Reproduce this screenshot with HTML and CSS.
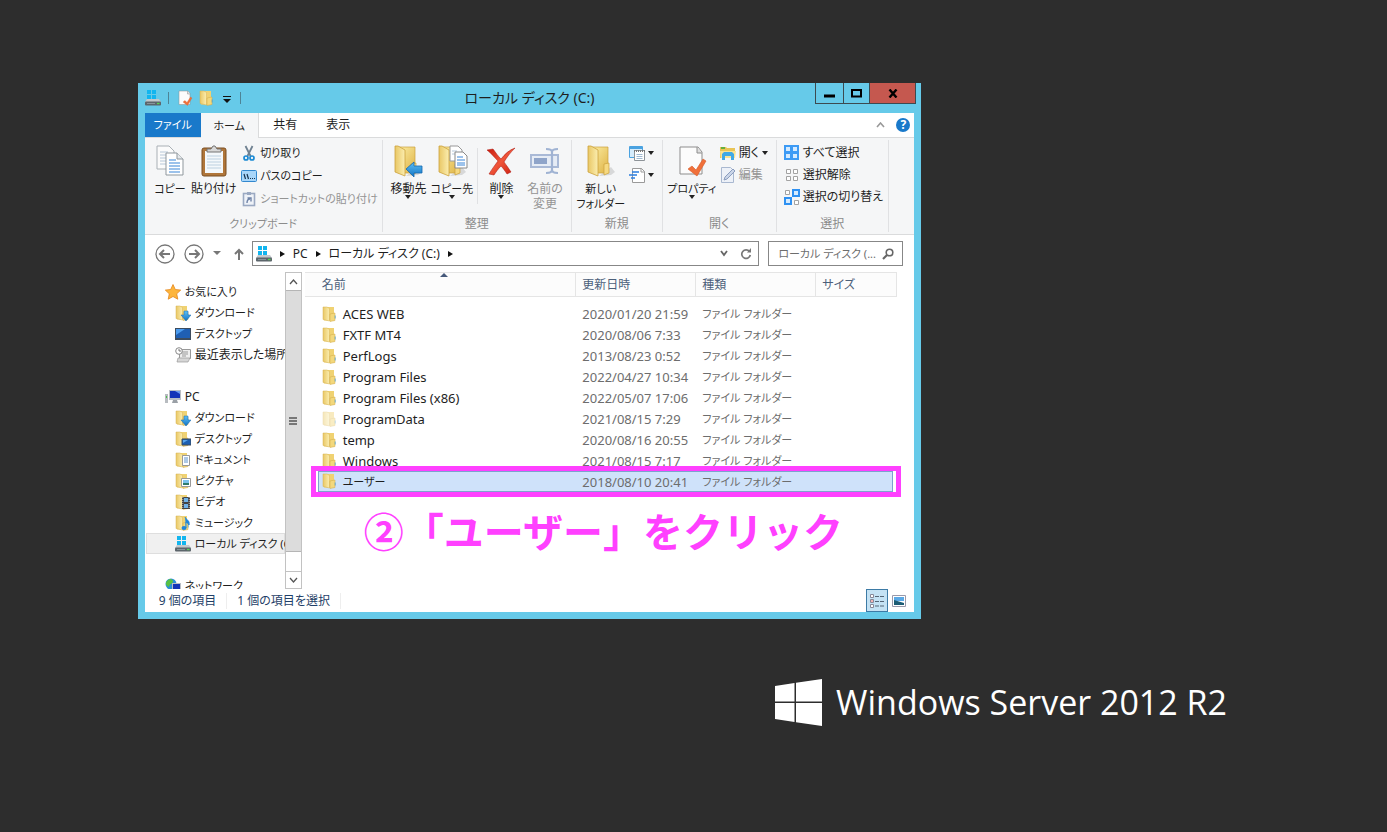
FILE: index.html
```html
<!DOCTYPE html>
<html lang="ja">
<head>
    <meta charset="UTF-8">
    <meta name="viewport" content="width=device-width, initial-scale=1.0">
    <title>ローカル ディスク (C:)</title>
    <link rel="stylesheet" href="styles.css">
</head>
<body>
    <!-- アイコン定義 -->
    <svg class="sprite" width="0" height="0" aria-hidden="true">
        <defs>
            <linearGradient id="gold" x1="0" x2="1" y1="0" y2="1">
                <stop offset="0" stop-color="#fdf0a8"/>
                <stop offset="1" stop-color="#dfb345"/>
            </linearGradient>
            <linearGradient id="gold2" x1="0" x2="1">
                <stop offset="0" stop-color="#e9c765"/>
                <stop offset="1" stop-color="#fbeeb0"/>
            </linearGradient>
            <linearGradient id="blue" x1="0" x2="0" y1="0" y2="1">
                <stop offset="0" stop-color="#5ec0f5"/>
                <stop offset="1" stop-color="#1273c4"/>
            </linearGradient>
            <linearGradient id="red" x1="0" x2="1" y1="0" y2="1">
                <stop offset="0" stop-color="#c8190c"/>
                <stop offset="0.5" stop-color="#f0553a"/>
                <stop offset="1" stop-color="#c8190c"/>
            </linearGradient>
        </defs>
        <symbol id="i-folder" viewBox="0 0 16 16">
            <path d="M2 1h10v13.500H2z" fill="#f0d272"/>
            <path d="M1 1h4l2.500 1.500V15L1 13.500z" fill="url(#gold2)" stroke="#d6b252" stroke-width=".5"/>
            <path d="M8 8l5-1v7.500L8 15.500z" fill="#f3d87c" stroke="#d0ab48" stroke-width=".5"/>
            <path d="M13.200 9.500v3" stroke="#4b9fd0" stroke-width=".8"/>
        </symbol>
        <symbol id="i-folder-lg" viewBox="0 0 32 32">
            <path d="M26 22l4 5-4 3-12 1z" fill="#000" opacity=".12"/>
            <path d="M5 2h18v26H8z" fill="url(#gold)" stroke="#cba23c" stroke-width=".7"/>
            <path d="M19 19l5-1v10l-5 2z" fill="#f6d980" stroke="#cba23c" stroke-width=".7"/>
            <path d="M3 1h3l7 4v26l-10-4z" fill="url(#gold2)" stroke="#cba23c" stroke-width=".8"/>
        </symbol>
        <symbol id="i-drive" viewBox="0 0 16 16">
            <path d="M2 0h4v4H2zM7 0h4v4H7zM2 5h4v4H2zM7 5h4v4H7z" fill="#12b5ef"/>
            <path d="M2 9h12l2 3H0z" fill="#c3c8cc"/>
            <rect y="11.5" width="16" height="4" rx="1" fill="#5c656b"/>
            <path d="M12 13.5h2.5" stroke="#56d44e" stroke-width="1.3"/>
            <path d="M2 13.5h8" stroke="#87939a"/>
        </symbol>
        <symbol id="i-props" viewBox="0 0 32 32">
            <path d="M4 2h18l4 5v22H4z" fill="#fcfcfc" stroke="#8d8d8d"/>
            <path d="M21 2v6h5" fill="#ddd" stroke="#8d8d8d"/>
            <path d="M12 24l4-3 4 4 7-11 3 2-9 15z" fill="#f0703a" stroke="#d55b2a" stroke-width=".6"/>
        </symbol>
        <symbol id="i-copy" viewBox="0 0 32 32">
            <path d="M3 1h12l5 5v18H3z" fill="#fbfbfb" stroke="#a9b0b5"/>
            <path d="M6 7h8M6 10h10M6 13h6M6 16h6M6 19h6" stroke="#b6c7d8"/>
            <path d="M12 8h11l6 6v16H12z" fill="#fff" stroke="#8f979d"/>
            <path d="M23 8v6h6" fill="#e5e9ec" stroke="#8f979d"/>
            <path d="M15 15h7M15 18h11M15 21h11M15 24h11M15 27h11" stroke="#3a86d8" stroke-width="1.2"/>
        </symbol>
        <symbol id="i-paste" viewBox="0 0 32 32">
            <rect x="4" y="3" width="24" height="28" rx="2" fill="#b0763a" stroke="#7b4e22"/>
            <path d="M7 6h18v22H7z" fill="#f4f8fb"/>
            <path d="M9 11h14M9 14h14M9 17h14M9 20h14M9 23h14" stroke="#bcd0e0"/>
            <path d="M9 7V4h4l2-3h2l2 3h4v3z" fill="#d8d8d8" stroke="#747474"/>
        </symbol>
        <symbol id="i-cut" viewBox="0 0 16 16">
            <path d="M4.500 1l5 10M11.500 1l-5 10" fill="none" stroke="#6f8191" stroke-width="1.8"/>
            <circle cx="5" cy="13" r="2" fill="none" stroke="#1b8ad4" stroke-width="1.7"/>
            <circle cx="11" cy="13" r="2" fill="none" stroke="#1b8ad4" stroke-width="1.7"/>
        </symbol>
        <symbol id="i-path" viewBox="0 0 16 16">
            <rect x=".5" y="2.500" width="15" height="11" rx="1" fill="#a8d6fa" stroke="#3288cf"/>
            <path d="M3 6l1.500 5M6 6l1.500 5" stroke="#16324e" stroke-width="1.2"/>
            <path d="M9 10.500h1M11 10.500h1M13 10.500h1" stroke="#16324e" stroke-width="1.2"/>
        </symbol>
        <symbol id="i-shortcut" viewBox="0 0 16 16">
            <rect x="2.500" y="2.500" width="11" height="12" fill="#eef2f8" stroke="#9aa9c2" stroke-width="1.6"/>
            <path d="M6 1h4v3H6z" fill="#9aa9c2"/>
            <path d="M6 12c0-3 1-4 3-4M6.500 7H10v3.500" fill="none" stroke="#6e82a6" stroke-width="1.4"/>
        </symbol>
        <symbol id="i-moveto" viewBox="0 0 32 32">
            <use href="#i-folder-lg" width="32" height="32"/>
            <path d="M14 24l8-7v4h8v7h-8v4z" fill="url(#blue)" stroke="#1568ae" stroke-width=".8"/>
        </symbol>
        <symbol id="i-copyto" viewBox="0 0 32 32">
            <use href="#i-folder-lg" width="32" height="32"/>
            <path d="M14 1h8l4 4v11H14z" fill="#fff" stroke="#999"/>
            <path d="M16 6h5M16 9h6" stroke="#b6c7d8"/>
            <path d="M19 7h8l4 4v12H19z" fill="#fff" stroke="#888"/>
            <path d="M21 12h6M21 15h8M21 18h8M21 20h8" stroke="#3a86d8"/>
        </symbol>
        <symbol id="i-delete" viewBox="0 0 32 32">
            <path d="M2 5l6-1c3 4 5 7 8 10 4-5 8-9 14-11-5 5-8 9-11 14 3 4 5 7 7 10l-4 2c-2-3-4-6-6-8-3 3-5 6-7 9l-5-1c3-5 6-9 9-13C9 12 6 8 2 5z" fill="url(#red)" stroke="#a8140c" stroke-width=".5"/>
        </symbol>
        <symbol id="i-rename" viewBox="0 0 32 32">
            <rect x="2" y="10" width="27" height="12" fill="#e6ecf5" stroke="#a9b9d6" stroke-width="2"/>
            <rect x="5" y="13" width="13" height="6" fill="#8fa4c9"/>
            <path d="M17 4c3 0 6 0 6 3v18c0 3-3 3-6 3M29 4c-3 0-6 0-6 3v18c0 3 3 3 6 3" fill="none" stroke="#a0b3d3" stroke-width="2.200"/>
        </symbol>
        <symbol id="i-newitem" viewBox="0 0 16 16">
            <path d="M.5 1.500h13v11H.5z" fill="#d5ecfc" stroke="#4aa2e0"/>
            <path d="M1 2h12v2H1z" fill="#4aa2e0"/>
            <path d="M5.500 5.500h10v10h-10z" fill="#fff" stroke="#8d9398"/>
            <path d="M5 6h11" stroke="#777" stroke-width="2" stroke-dasharray="1 1"/>
            <path d="M7.500 9.500h6M7.500 11.500h6M7.500 13.500h6" stroke="#9fb9d0"/>
        </symbol>
        <symbol id="i-easy" viewBox="0 0 16 16">
            <path d="M3.500 1.500h9l3 3v11h-12z" fill="#fff" stroke="#9a9a9a"/>
            <path d="M12 1v4h4" fill="none" stroke="#9a9a9a"/>
            <path d="M3 5h7M0 8h8M2 11h4" stroke="#2d7fe0" stroke-width="1.5"/>
        </symbol>
        <symbol id="i-open" viewBox="0 0 16 16">
            <path d="M0 2h6l1 1h8v10H0z" fill="#e9c456"/>
            <path d="M1 3h4" stroke="#3aa935" stroke-width="1.5"/>
            <path d="M0 6h16l-1 7H1z" fill="#f9e394"/>
            <path d="M2 15V9l2-2h8l2 2v6h-3v-4H5v4z" fill="#3fa9e6"/>
        </symbol>
        <symbol id="i-edit" viewBox="0 0 16 16">
            <path d="M1.500.5h9l3 3v12h-12z" fill="#edf1f8" stroke="#a9b8d0"/>
            <path d="M4 13l1-3 8-8 2 2-8 8z" fill="#cad5e8" stroke="#8b9dbe"/>
        </symbol>
        <symbol id="i-selall" viewBox="0 0 16 16">
            <path d="M0 0h15v15H0z" fill="#3d9bf5"/>
            <path d="M2 2h4v4H2zM9 2h4v4H9zM2 9h4v4H2zM9 9h4v4H9z" fill="#d5ebff"/>
        </symbol>
        <symbol id="i-selnone" viewBox="0 0 16 16">
            <path d="M2.500 2.500h4v4h-4zM9.500 2.500h4v4h-4zM2.500 9.500h4v4h-4zM9.500 9.500h4v4h-4z" fill="#fff" stroke="#a3a3a3"/>
        </symbol>
        <symbol id="i-selinv" viewBox="0 0 16 16">
            <path d="M1.500 1.500h4v4h-4zM10.500 11.500h4v4h-4z" fill="#fff" stroke="#a3a3a3"/>
            <path d="M9 1h6v6H9zM1 9h6v6H1z" fill="#d5ebff" stroke="#2f91f2" stroke-width="2"/>
        </symbol>
        <symbol id="i-star" viewBox="0 0 16 16">
            <path d="M8 .5l2.300 5 5.400.600-4 3.700 1.100 5.400L8 12.500l-4.800 2.700 1.100-5.400-4-3.700 5.400-.6z" fill="#fdb53c" stroke="#e5861c" stroke-width=".8"/>
        </symbol>
        <symbol id="i-desktop" viewBox="0 0 16 16">
            <path d="M0 2h16v12H0z" fill="#3d4c5e"/>
            <path d="M1 3h14v9H1z" fill="#1f5fb4"/>
            <path d="M1 3h9L1 9z" fill="#4b9cf0"/>
        </symbol>
        <symbol id="i-recent" viewBox="0 0 16 16">
            <path d="M4.500 2.500h11v9h-11z" fill="#eee" stroke="#999"/>
            <path d="M7 5h6M7 7h6M7 9h4" stroke="#999"/>
            <path d="M3 11h12l-2 4H2z" fill="#d6d6d6" stroke="#999" stroke-width=".7"/>
            <circle cx="4" cy="4" r="3.300" fill="#fff" stroke="#888"/>
            <path d="M4 2v2h2" fill="none" stroke="#555" stroke-width=".8"/>
        </symbol>
        <symbol id="i-pc" viewBox="0 0 16 16">
            <path d="M0 5h3v9H0z" fill="#b8bcc0"/>
            <path d="M1 7h1v2H1z" fill="#4cc04a"/>
            <path d="M4 1h12v10H4z" fill="#b9bec5"/>
            <path d="M5 2h10v7H5z" fill="#1434b8"/>
            <path d="M10 2h5v3z" fill="#6b9bf0"/>
            <path d="M8 11h4l1 3H7z" fill="#9aa0a6"/>
        </symbol>
        <symbol id="i-f-down" viewBox="0 0 16 16">
            <use href="#i-folder" width="16" height="16"/>
            <path d="M9 6h4v4h3l-5 6-5-6h3z" fill="url(#blue)" stroke="#1568ae" stroke-width=".5"/>
        </symbol>
        <symbol id="i-f-desk" viewBox="0 0 16 16">
            <use href="#i-folder" width="16" height="16"/>
            <path d="M7 8h9v6H7z" fill="#1d5fb0" stroke="#3d4c5e"/>
            <path d="M8 9h5l-5 3z" fill="#5aa6ee"/>
        </symbol>
        <symbol id="i-f-doc" viewBox="0 0 16 16">
            <use href="#i-folder" width="16" height="16"/>
            <path d="M7.500 3.500h7v10h-7z" fill="#fff" stroke="#999"/>
            <path d="M9 6h4M9 8h4M9 10h4" stroke="#5b92cc"/>
        </symbol>
        <symbol id="i-f-pic" viewBox="0 0 16 16">
            <use href="#i-folder" width="16" height="16"/>
            <path d="M6.500 5.500h9v8h-9z" fill="#fff" stroke="#999"/>
            <path d="M8 7h6v3H8z" fill="#7cc3ee"/>
            <path d="M8 10h6v2H8z" fill="#2e7b6c"/>
        </symbol>
        <symbol id="i-f-video" viewBox="0 0 16 16">
            <use href="#i-folder" width="16" height="16"/>
            <path d="M7 3h8v12H7z" fill="#444"/>
            <path d="M9 4h4v4H9zM9 10h4v4H9z" fill="#6fb2e8"/>
            <path d="M7.800 3v12M14.200 3v12" stroke="#ddd" stroke-dasharray="1 1" stroke-width=".8"/>
        </symbol>
        <symbol id="i-f-music" viewBox="0 0 16 16">
            <use href="#i-folder" width="16" height="16"/>
            <path d="M10 2c1 3 5 3 4 8-1-2-2-2-3-3v6" fill="#1e86dc" stroke="#1e86dc"/>
            <ellipse cx="9" cy="13" rx="2.500" ry="2" fill="#1e86dc"/>
        </symbol>
        <symbol id="i-net" viewBox="0 0 16 16">
            <circle cx="6" cy="6" r="5.500" fill="#2a8fd8"/>
            <path d="M2 3c3-3 5-2 6 0S4 6 4 9C1 8 0 5 2 3z" fill="#58c043"/>
            <path d="M7 5h9v8H7z" fill="#b9bec5"/>
            <path d="M8 6h7v6H8z" fill="#1434b8"/>
        </symbol>
    </svg>

    <main class="desktop">
        <section class="window">
            <header class="titlebar">
                <div class="quick">
                    <svg class="icon"><use href="#i-drive"/></svg>
                    <span class="quick-sep"></span>
                    <button aria-label="プロパティ"><svg class="icon"><use href="#i-props"/></svg></button>
                    <button aria-label="新しいフォルダー"><svg class="icon"><use href="#i-folder"/></svg></button>
                    <button class="quick-more" aria-label="カスタマイズ"><svg width="8" height="7"><path d="M0 .5h8" stroke="#111"/><path d="M0 3h8L4 7z" fill="#111"/></svg></button>
                    <span class="quick-sep"></span>
                </div>
                <h1>ローカル ディスク (C:)</h1>
                <div class="window-buttons">
                    <button class="minimize" aria-label="最小化"><svg width="11" height="9"><path d="M0 7h11" stroke="#000" stroke-width="3"/></svg></button>
                    <button class="maximize" aria-label="最大化"><svg width="11" height="9"><path d="M1 1h9v6.500H1z" fill="none" stroke="#000" stroke-width="2"/></svg></button>
                    <button class="close" aria-label="閉じる"><svg width="10" height="9"><path d="M1.500 0.500l7 8M8.500 0.500l-7 8" stroke="#000" stroke-width="2.400"/></svg></button>
                </div>
            </header>

            <div class="window-body">
                <nav class="tabs">
                    <button class="tab tab-file">ファイル</button>
                    <button class="tab active">ホーム</button>
                    <button class="tab">共有</button>
                    <button class="tab">表示</button>
                    <div class="tabs-right">
                        <button aria-label="リボンの最小化"><svg width="9" height="6"><path d="M1 5l3.500-4L8 5" fill="none" stroke="#999" stroke-width="1.600"/></svg></button>
                        <button class="help" aria-label="ヘルプ">?</button>
                    </div>
                </nav>

                <!-- リボン -->
                <div class="ribbon">
                    <div class="group group-clipboard">
                        <div class="group-items">
                            <button class="big"><svg class="icon-lg"><use href="#i-copy"/></svg><span class="kana">コピー</span></button>
                            <button class="big"><svg class="icon-lg"><use href="#i-paste"/></svg>貼り付け</button>
                            <div class="smalls">
                                <button class="small"><svg class="icon"><use href="#i-cut"/></svg>切り取り</button>
                                <button class="small"><svg class="icon"><use href="#i-path"/></svg>パスのコピー</button>
                                <button class="small disabled"><svg class="icon"><use href="#i-shortcut"/></svg>ショートカットの貼り付け</button>
                            </div>
                        </div>
                        <div class="group-name kana">クリップボード</div>
                    </div>
                    <div class="group group-organize">
                        <div class="group-items">
                            <button class="big"><svg class="icon-lg"><use href="#i-moveto"/></svg>移動先<i class="arrow"></i></button>
                            <button class="big"><svg class="icon-lg"><use href="#i-copyto"/></svg><span class="kana">コピー先</span><i class="arrow"></i></button>
                            <span class="item-sep"></span>
                            <button class="big"><svg class="icon-lg"><use href="#i-delete"/></svg>削除<i class="arrow"></i></button>
                            <button class="big disabled"><svg class="icon-lg"><use href="#i-rename"/></svg>名前の<br>変更</button>
                        </div>
                        <div class="group-name">整理</div>
                    </div>
                    <div class="group group-new">
                        <div class="group-items">
                            <button class="big"><svg class="icon-lg"><use href="#i-folder-lg"/></svg>新しい<br>フォルダー</button>
                            <div class="smalls">
                                <button class="small" aria-label="新しいアイテム"><svg class="icon"><use href="#i-newitem"/></svg><i class="arrow"></i></button>
                                <button class="small" aria-label="ショートカット"><svg class="icon"><use href="#i-easy"/></svg><i class="arrow"></i></button>
                            </div>
                        </div>
                        <div class="group-name">新規</div>
                    </div>
                    <div class="group group-open">
                        <div class="group-items">
                            <button class="big"><svg class="icon-lg"><use href="#i-props"/></svg>プロパティ<i class="arrow"></i></button>
                            <div class="smalls">
                                <button class="small"><svg class="icon"><use href="#i-open"/></svg>開く<i class="arrow"></i></button>
                                <button class="small disabled"><svg class="icon"><use href="#i-edit"/></svg>編集</button>
                            </div>
                        </div>
                        <div class="group-name">開く</div>
                    </div>
                    <div class="group group-select">
                        <div class="group-items">
                            <div class="smalls">
                                <button class="small"><svg class="icon"><use href="#i-selall"/></svg>すべて選択</button>
                                <button class="small"><svg class="icon"><use href="#i-selnone"/></svg>選択解除</button>
                                <button class="small"><svg class="icon"><use href="#i-selinv"/></svg>選択の切り替え</button>
                            </div>
                        </div>
                        <div class="group-name">選択</div>
                    </div>
                </div>

                <!-- アドレスバー -->
                <div class="address-row">
                    <button aria-label="戻る"><svg width="20" height="20"><circle cx="10" cy="10" r="9" fill="none" stroke="#777" stroke-width="1.300"/><path d="M5 10h10M9 6l-4 4 4 4" fill="none" stroke="#777" stroke-width="2"/></svg></button>
                    <button aria-label="進む"><svg width="20" height="20"><circle cx="10" cy="10" r="9" fill="none" stroke="#777" stroke-width="1.300"/><path d="M15 10H5M11 6l4 4-4 4" fill="none" stroke="#777" stroke-width="2"/></svg></button>
                    <button aria-label="最近表示した場所"><svg width="8" height="5"><path d="M0 0h8L4 4z" fill="#777"/></svg></button>
                    <button class="up" aria-label="上へ"><svg width="10" height="12"><path d="M5 12V2M1 6l4-4 4 4" fill="none" stroke="#777" stroke-width="2"/></svg></button>
                    <div class="address">
                        <svg class="icon"><use href="#i-drive"/></svg>
                        <i class="crumb"></i>
                        <a href="#">PC</a>
                        <i class="crumb"></i>
                        <a href="#">ローカル ディスク (C:)</a>
                        <i class="crumb"></i>
                        <button class="history" aria-label="履歴"><svg width="8" height="7"><path d="M1 1l3 4 3-4" fill="none" stroke="#666" stroke-width="1.800"/></svg></button>
                        <button aria-label="更新"><svg width="12" height="12"><path d="M9.500 3.500A4.300 4.300 0 1 0 10.300 7" fill="none" stroke="#777" stroke-width="1.700"/><path d="M7 4.500h4V0z" fill="#777"/></svg></button>
                    </div>
                    <div class="search">
                        <input type="text" aria-label="検索" placeholder="ローカル ディスク (...">
                        <svg width="12" height="12"><circle cx="7.500" cy="4.500" r="3.300" fill="none" stroke="#666" stroke-width="1.600"/><path d="M5 7l-4 4" stroke="#666" stroke-width="2.200"/></svg>
                    </div>
                </div>

                <div class="content">
                    <nav class="tree">
                        <a href="#" class="root"><svg class="icon"><use href="#i-star"/></svg>お気に入り</a>
                        <a href="#"><svg class="icon"><use href="#i-f-down"/></svg>ダウンロード</a>
                        <a href="#"><svg class="icon"><use href="#i-desktop"/></svg>デスクトップ</a>
                        <a href="#" class="wide"><svg class="icon"><use href="#i-recent"/></svg>最近表示した場所</a>
                        <a href="#" class="root wide spaced"><svg class="icon"><use href="#i-pc"/></svg>PC</a>
                        <a href="#"><svg class="icon"><use href="#i-f-down"/></svg>ダウンロード</a>
                        <a href="#"><svg class="icon"><use href="#i-f-desk"/></svg>デスクトップ</a>
                        <a href="#"><svg class="icon"><use href="#i-f-doc"/></svg>ドキュメント</a>
                        <a href="#"><svg class="icon"><use href="#i-f-pic"/></svg>ピクチャ</a>
                        <a href="#"><svg class="icon"><use href="#i-f-video"/></svg>ビデオ</a>
                        <a href="#"><svg class="icon"><use href="#i-f-music"/></svg>ミュージック</a>
                        <a href="#" class="current"><svg class="icon"><use href="#i-drive"/></svg>ローカル ディスク (C:)</a>
                        <a href="#" class="root spaced"><svg class="icon"><use href="#i-net"/></svg>ネットワーク</a>
                    </nav>
                    <div class="scrollbar">
                        <button aria-label="上へスクロール"><svg width="9" height="6"><path d="M1 5l3.500-4L8 5" fill="none" stroke="#555" stroke-width="1.300"/></svg></button>
                        <div class="thumb"><svg width="8" height="8"><path d="M0 1h8M0 4h8M0 7h8" stroke="#555" stroke-width="1.500"/></svg></div>
                        <button aria-label="下へスクロール"><svg width="9" height="6"><path d="M1 1l3.500 4L8 1" fill="none" stroke="#555" stroke-width="1.300"/></svg></button>
                    </div>
                    <div class="files">
                        <table>
                            <thead>
                                <tr>
                                    <th class="col-name">名前<i class="sort"></i></th>
                                    <th class="col-date">更新日時</th>
                                    <th class="col-type">種類</th>
                                    <th class="col-size">サイズ</th>
                                </tr>
                            </thead>
                            <tbody>
                                <tr><td><svg class="icon"><use href="#i-folder"/></svg>ACES WEB</td><td>2020/01/20 21:59</td><td class="kana">ファイル フォルダー</td><td></td></tr>
                                <tr><td><svg class="icon"><use href="#i-folder"/></svg>FXTF MT4</td><td>2020/08/06 7:33</td><td class="kana">ファイル フォルダー</td><td></td></tr>
                                <tr><td><svg class="icon"><use href="#i-folder"/></svg>PerfLogs</td><td>2013/08/23 0:52</td><td class="kana">ファイル フォルダー</td><td></td></tr>
                                <tr><td><svg class="icon"><use href="#i-folder"/></svg>Program Files</td><td>2022/04/27 10:34</td><td class="kana">ファイル フォルダー</td><td></td></tr>
                                <tr><td><svg class="icon"><use href="#i-folder"/></svg>Program Files (x86)</td><td>2022/05/07 17:06</td><td class="kana">ファイル フォルダー</td><td></td></tr>
                                <tr><td><svg class="icon faded"><use href="#i-folder"/></svg>ProgramData</td><td>2021/08/15 7:29</td><td class="kana">ファイル フォルダー</td><td></td></tr>
                                <tr><td><svg class="icon"><use href="#i-folder"/></svg>temp</td><td>2020/08/16 20:55</td><td class="kana">ファイル フォルダー</td><td></td></tr>
                                <tr><td><svg class="icon"><use href="#i-folder"/></svg>Windows</td><td>2021/08/15 7:17</td><td class="kana">ファイル フォルダー</td><td></td></tr>
                                <tr class="selected"><td><svg class="icon"><use href="#i-folder"/></svg><span class="kana">ユーザー</span></td><td>2018/08/10 20:41</td><td class="kana">ファイル フォルダー</td><td></td></tr>
                            </tbody>
                        </table>
                        <p class="callout">②「ユーザー」をクリック</p>
                    </div>
                </div>

                <footer class="status">
                    <span>9 個の項目</span>
                    <span>1 個の項目を選択</span>
                    <div class="views">
                        <button class="active" aria-label="詳細"><svg width="16" height="14"><path d="M1.500.5h3v3h-3zM1.500 5.500h3v3h-3zM1.500 10.500h3v3h-3z" fill="#fff" stroke="#889"/><path d="M3 6.500v1" stroke="#d33" stroke-width="1.500"/><path d="M6 2.500h10M6 7.500h10M6 12h10" stroke="#567" stroke-dasharray="4 1"/></svg></button>
                        <button aria-label="大アイコン"><svg width="14" height="12"><path d="M.5.5h13v11H.5z" fill="#fff" stroke="#99a"/><path d="M2 2h10v4H2z" fill="#5aa9e6"/><path d="M2 5l10 3v2H2z" fill="#1c5c74"/></svg></button>
                    </div>
                </footer>
            </div>
        </section>

        <div class="brand">
            <svg width="47" height="47" viewBox="0 0 47 47"><path d="M0 7l19.500-3v18.500H0zM21 3.700L47 0v22.500H21zM0 24h19.500v19L0 40zM21 24h26v23l-26-3.700z" fill="#fff"/></svg>
            <span>Windows Server 2012 R2</span>
        </div>
    </main>
</body>
</html>
```

FILE: styles.css
```css
* {
    box-sizing: border-box;
}
body {
    margin: 0;
    background-color: #2d2d2d;
    font-family: "Noto Sans", "Noto Sans CJK JP", sans-serif;
    font-size: 12px;
    line-height: 16px;
    color: #1e1e1e;
    font-feature-settings: "palt";
}
button {
    margin: 0;
    padding: 0;
    border: none;
    background: none;
    font: inherit;
    font-feature-settings: inherit;
    color: inherit;
    cursor: pointer;
    white-space: nowrap;
}
svg {
    display: block;
    flex: none;
}
a {
    color: inherit;
    text-decoration: none;
}
.sprite {
    position: absolute;
}
.icon {
    width: 16px;
    height: 16px;
}
.icon-lg {
    width: 32px;
    height: 32px;
}
.faded {
    opacity: 0.45;
}
.kana {
    font-size: 11px;
}
.desktop {
    min-height: 100vh;
    padding: 83px 160px 0 calc(10vw - 1px);
    display: flex;
    flex-direction: column;
    align-items: flex-start;
}
.window {
    width: 56.5vw;
    min-width: 770px;
    padding: 0 7px 7px;
    background-color: #66cae9;
}

/* タイトルバー */
.titlebar {
    height: 30px;
    display: grid;
    grid-template-columns: 1fr auto 1fr;
    align-items: center;
}
.titlebar h1 {
    margin: 0;
    font-size: 14px;
    font-weight: normal;
    line-height: 20px;
}
.quick {
    display: flex;
    align-items: center;
    gap: 6px;
}
.quick-sep {
    width: 1px;
    height: 12px;
    margin: 0 2px 0 1px;
    background-color: #4d8496;
}
.quick-more {
    margin: 2px 2px 0;
}
.window-buttons {
    display: flex;
    justify-content: flex-end;
    align-self: start;
    margin-right: -2px;
}
.window-buttons button {
    width: 29px;
    height: 21px;
    display: flex;
    align-items: center;
    justify-content: center;
    border: 1px solid #3c4a50;
    border-top: none;
    margin-left: -1px;
}
.window-buttons .maximize {
    width: 27px;
}
.window-buttons .close {
    width: 47px;
    background-color: #c5584f;
}

/* タブ */
.window-body {
    background-color: #fff;
}
.tabs {
    height: 25px;
    display: flex;
    border-bottom: 1px solid #dadbdc;
}
.tab {
    width: 53px;
    height: 24px;
}
.tab-file {
    width: 56px;
    font-size: 11px;
    background-color: #1979ca;
    color: #fff;
}
.tab.active {
    width: 58px;
    height: 25px;
    font-size: 11px;
    background-color: #f5f6f7;
    border: 1px solid #dadbdc;
    border-width: 0 1px 0 0;
}
.tabs-right {
    margin-left: auto;
    padding-right: 4px;
    display: flex;
    align-items: center;
    gap: 11px;
}
.help {
    width: 14px;
    height: 14px;
    border-radius: 50%;
    background-color: #1979ca;
    color: #fff;
    font-size: 12px;
    font-weight: bold;
    line-height: 14px;
}

/* リボン */
.ribbon {
    height: 97px;
    padding: 2px 0;
    display: flex;
    background-color: #f5f6f7;
    border-bottom: 1px solid #dadbdc;
}
.group {
    display: flex;
    flex-direction: column;
    justify-content: space-between;
    border-right: 1px solid #e0e1e3;
}
.group-clipboard {
    width: 238px;
}
.group-organize {
    width: 189px;
}
.group-new {
    width: 91px;
}
.group-open {
    width: 114px;
}
.group-select {
    width: 112px;
}
.group-items {
    display: flex;
    align-items: flex-start;
    padding: 5px 4px 0;
}
.group-name {
    text-align: center;
    color: #8c8c8c;
}
.big {
    width: 44px;
    display: flex;
    flex-direction: column;
    align-items: center;
    line-height: 15px;
    font-size: 12px;
}
.big .icon-lg {
    margin-bottom: 4px;
}
.big .arrow {
    margin-top: -1px;
}
.group-new .big,
.group-open .big {
    width: 50px;
    font-size: 11px;
}
.disabled {
    color: #949494;
}
.smalls {
    display: flex;
    flex-direction: column;
    gap: 6px;
    padding-left: 3px;
}
.small {
    display: flex;
    align-items: center;
    gap: 3px;
}
.group-clipboard .big {
    width: 45px;
}
.group-clipboard .smalls {
    gap: 7px;
    padding-left: 5px;
}
.group-clipboard .small {
    font-size: 11px;
}
.arrow {
    border: 3px solid transparent;
    border-top: 4px solid #222;
    border-bottom: none;
}
.item-sep {
    width: 1px;
    height: 56px;
    margin: 3px 2px 0 3px;
    background-color: #e0e1e3;
}

/* アドレスバー */
.address-row {
    height: 37px;
    padding: 0 11px 0 10px;
    display: flex;
    align-items: center;
    gap: 9px;
}
.up {
    margin: 0 -1px 0 4px;
}
.address {
    flex: 1;
    height: 25px;
    padding: 0 6px 0 3px;
    display: flex;
    align-items: center;
    gap: 8px;
    border: 1px solid #878787;
}
.crumb {
    border: 3px solid transparent;
    border-left: 5px solid #111;
    border-right: none;
}
.history {
    margin: 0 4px 0 auto;
}
.search {
    width: 135px;
    height: 25px;
    padding: 0 8px 0 9px;
    display: flex;
    align-items: center;
    border: 1px solid #878787;
}
.search input {
    flex: 1;
    min-width: 0;
    padding: 0;
    border: none;
    outline: none;
    font: inherit;
    font-size: 11px;
    font-feature-settings: inherit;
}
.search input::placeholder {
    color: #6d6d6d;
}

/* ツリー */
.content {
    height: 317px;
    display: flex;
}
.tree {
    width: 140px;
    padding-top: 9px;
    overflow: hidden;
}
.tree a {
    height: 21px;
    padding-left: 29px;
    margin-left: 1px;
    display: flex;
    align-items: center;
    gap: 4px;
    font-size: 11px;
    white-space: nowrap;
}
.tree .wide {
    font-size: 12px;
}
.tree .root {
    padding-left: 19px;
}
.tree .spaced {
    margin-top: 21px;
}
.tree .current {
    background-color: #f0f0f0;
    box-shadow: inset 0 0 0 1px #dedede;
}
.scrollbar {
    width: 17px;
    display: flex;
    flex-direction: column;
    border: 1px solid #c2c2c2;
}
.scrollbar button {
    height: 17px;
    display: flex;
    align-items: center;
    justify-content: center;
}
.thumb {
    flex: 1;
    margin-bottom: 19px;
    display: flex;
    align-items: center;
    justify-content: center;
    background-color: #dcdcdc;
    border: 1px solid #b5b5b5;
    border-width: 1px 0;
}
.scrollbar button:last-child {
    border-top: 1px solid #c2c2c2;
}

/* ファイル一覧 */
.files {
    flex: 1;
    padding: 0 17px 0 3px;
}
.files table {
    position: relative;
    z-index: 0;
    width: 100%;
    table-layout: fixed;
    border-collapse: separate;
    border-spacing: 0;
}
.files th {
    height: 25px;
    padding: 0 6px;
    text-align: left;
    font-weight: normal;
    color: #4c607a;
    background-color: #fcfcfc;
    border: 1px solid #e5e5e5;
    border-left: none;
}
.files .col-name {
    position: relative;
    padding-left: 17px;
}
.col-date,
.col-type {
    width: 120px;
}
.col-size {
    width: 81px;
}
.sort {
    position: absolute;
    top: 0;
    left: 50%;
    border: 4px solid transparent;
    border-bottom-color: #46597a;
    border-top: none;
}
.files td {
    height: 21px;
    padding: 0 6px;
    font-size: 13px;
    color: #6d6d6d;
    white-space: nowrap;
}
.files tr:first-child td {
    height: 27px;
    padding-top: 6px;
}
.files td:first-child {
    padding-left: 17px;
    color: #1e1e1e;
}
.files td .icon {
    display: inline-block;
    vertical-align: -3px;
    margin-right: 5px;
}
.files td.kana {
    font-size: 11px;
}
.selected {
    position: relative;
}
.selected td:first-child::before {
    content: "";
    position: absolute;
    z-index: -1;
    inset: 0 4px 0 13px;
    background-color: #cfe2fa;
    border: 1px solid #7da2ce;
}
.selected td:first-child::after {
    content: "";
    position: absolute;
    inset: -5px -4px -5px 6px;
    border: 5px solid #ff40ff;
}
.callout {
    margin: 10px 0 0 59px;
    font-family: "Noto Sans CJK JP", sans-serif;
    font-size: 40px;
    font-weight: bold;
    line-height: 56px;
    font-feature-settings: normal;
    white-space: nowrap;
    color: #ff40ff;
}

/* ステータスバー */
.status {
    height: 23px;
    padding: 0 4px 0 14px;
    display: flex;
    align-items: center;
    color: #1f3f68;
}
.status span {
    padding-right: 10px;
    margin-right: 10px;
    border-right: 1px solid #eee;
}
.views {
    margin-left: auto;
    display: flex;
}
.views button {
    width: 22px;
    height: 23px;
    display: flex;
    align-items: center;
    justify-content: center;
}
.views .active {
    background-color: #c4e2f4;
    border: 1px solid #3d7ba6;
}

/* ロゴ */
.brand {
    align-self: flex-end;
    margin-top: 59px;
    display: flex;
    align-items: center;
    gap: 14px;
    color: #fff;
    font-family: "Open Sans", sans-serif;
    font-size: 34px;
    line-height: 48px;
    white-space: nowrap;
}
```
